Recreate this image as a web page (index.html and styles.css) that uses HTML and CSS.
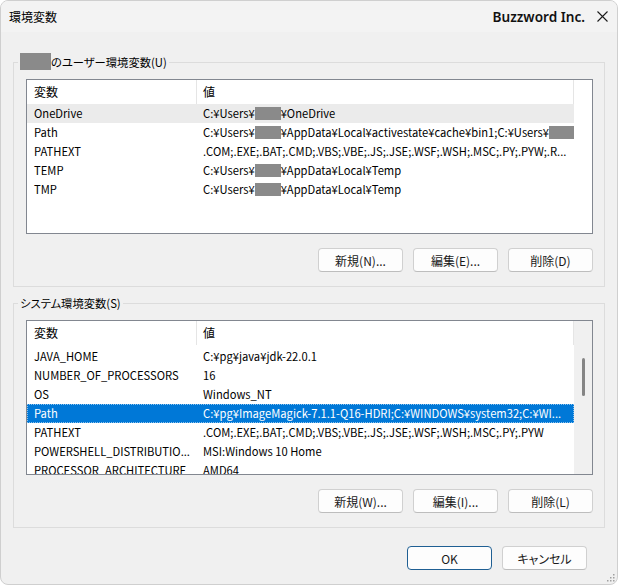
FILE: index.html
```html
<!DOCTYPE html>
<html lang="ja">
<head>
    <meta charset="UTF-8">
    <title>環境変数</title>
    <link rel="stylesheet" href="styles.css">
</head>
<body>
    <div class="window">
        <div class="titlebar">
            <span class="title">環境変数</span>
            <span class="brand">Buzzword Inc.</span>
            <svg class="close" width="11" height="11" viewBox="0 0 11 11">
                <path d="M0.5 0.5 L10.5 10.5 M10.5 0.5 L0.5 10.5" stroke="#1b1b1b" stroke-width="1.1" fill="none"/>
            </svg>
        </div>

        <div class="content">
            <fieldset class="group">
                <legend><span class="redact redact-legend"></span>のユーザー環境変数(U)</legend>
                <div class="listbox">
                    <div class="list-main">
                        <div class="list-head">
                            <div class="col-name">変数</div>
                            <div class="col-val">値</div>
                        </div>
                        <div class="rows">
                            <div class="row hover"><div class="name">OneDrive</div><div class="val">C:¥Users¥<span class="redact"></span>¥OneDrive</div></div>
                            <div class="row"><div class="name">Path</div><div class="val">C:¥Users¥<span class="redact"></span>¥AppData¥Local¥activestate¥cache¥bin1;C:¥Users¥<span class="redact"></span></div></div>
                            <div class="row"><div class="name">PATHEXT</div><div class="val">.COM;.EXE;.BAT;.CMD;.VBS;.VBE;.JS;.JSE;.WSF;.WSH;.MSC;.PY;.PYW;.R...</div></div>
                            <div class="row"><div class="name">TEMP</div><div class="val">C:¥Users¥<span class="redact"></span>¥AppData¥Local¥Temp</div></div>
                            <div class="row"><div class="name">TMP</div><div class="val">C:¥Users¥<span class="redact"></span>¥AppData¥Local¥Temp</div></div>
                        </div>
                    </div>
                    <div class="list-side"></div>
                </div>
                <div class="buttons">
                    <button class="btn">新規(N)...</button>
                    <button class="btn">編集(E)...</button>
                    <button class="btn">削除(D)</button>
                </div>
            </fieldset>

            <fieldset class="group group-system">
                <legend>システム環境変数(S)</legend>
                <div class="listbox">
                    <div class="list-main">
                        <div class="list-head">
                            <div class="col-name">変数</div>
                            <div class="col-val">値</div>
                        </div>
                        <div class="rows rows-scrolled">
                            <div class="row"><div class="name">JAVA_HOME</div><div class="val">C:¥pg¥java¥jdk-22.0.1</div></div>
                            <div class="row"><div class="name">NUMBER_OF_PROCESSORS</div><div class="val">16</div></div>
                            <div class="row"><div class="name">OS</div><div class="val">Windows_NT</div></div>
                            <div class="row selected"><div class="name">Path</div><div class="val">C:¥pg¥ImageMagick-7.1.1-Q16-HDRI;C:¥WINDOWS¥system32;C:¥WI...</div></div>
                            <div class="row"><div class="name">PATHEXT</div><div class="val">.COM;.EXE;.BAT;.CMD;.VBS;.VBE;.JS;.JSE;.WSF;.WSH;.MSC;.PY;.PYW</div></div>
                            <div class="row"><div class="name">POWERSHELL_DISTRIBUTIO...</div><div class="val">MSI:Windows 10 Home</div></div>
                            <div class="row"><div class="name">PROCESSOR_ARCHITECTURE</div><div class="val">AMD64</div></div>
                        </div>
                    </div>
                    <div class="list-side scrollbar">
                        <div class="thumb"></div>
                    </div>
                </div>
                <div class="buttons">
                    <button class="btn">新規(W)...</button>
                    <button class="btn">編集(I)...</button>
                    <button class="btn">削除(L)</button>
                </div>
            </fieldset>
        </div>

        <div class="footer">
            <button class="btn btn-default">OK</button>
            <button class="btn">キャンセル</button>
        </div>

        <svg class="grip" width="9" height="9" viewBox="0 0 9 9">
            <rect x="7" y="1" width="1.5" height="1.5" fill="#a0a0a0"/>
            <rect x="4" y="4" width="1.5" height="1.5" fill="#a0a0a0"/>
            <rect x="7" y="4" width="1.5" height="1.5" fill="#a0a0a0"/>
            <rect x="1" y="7" width="1.5" height="1.5" fill="#a0a0a0"/>
            <rect x="4" y="7" width="1.5" height="1.5" fill="#a0a0a0"/>
            <rect x="7" y="7" width="1.5" height="1.5" fill="#a0a0a0"/>
        </svg>
    </div>
</body>
</html>
```

FILE: styles.css
```css
:root {
    --bg: #f0f0f0;
    --frame: #cfcfcf;
    --group-border: #dcdcdc;
    --list-border: #828790;
    --divider: #e5e5e5;
    --select: #0078d7;
    --redact: #8a8a8a;
    --font: "Noto Sans CJK JP", "Noto Sans", sans-serif;
}

* {
    box-sizing: border-box;
}

body {
    margin: 0;
    background: #fff;
    font-family: var(--font);
    font-size: 12px;
    color: #000;
}

.window {
    position: relative;
    width: 618px;
    height: 585px;
    background: var(--bg);
    border: 1px solid var(--frame);
    border-radius: 8px;
    overflow: hidden;
}

/* Заголовок */
.titlebar {
    display: flex;
    align-items: center;
    height: 31px;
    padding: 0 9px 0 8px;
    background: #f3f3f3;
}

.title {
    font-size: 12px;
}

.brand {
    margin-left: auto;
    font-family: "Noto Sans", sans-serif;
    font-weight: 600;
    font-size: 13.6px;
    color: #111;
}

.close {
    margin-left: 12px;
}

/* Группы */
.content {
    padding: 22px 12px 0;
}

.group {
    margin: 0;
    min-width: 0;
    padding: 9px 11px 14px 12px;
    border: 1px solid var(--group-border);
}

.group-system {
    margin-top: 8px;
}

.group legend {
    margin-left: -8px;
    padding: 0 2px;
    line-height: 16px;
    font-size: 11.3px;
    font-feature-settings: "palt";
}

.redact {
    display: inline-block;
    width: 26px;
    height: 13px;
    vertical-align: -2px;
    background: var(--redact);
}

.redact-legend {
    width: 31px;
    height: 17px;
    vertical-align: top;
    margin-top: -1px;
}

/* Список */
.listbox {
    display: flex;
    height: 155px;
    background: #fff;
    border: 1px solid var(--list-border);
    overflow: hidden;
}

.list-main {
    width: 547px;
}

.list-side {
    flex: 1;
}

.scrollbar {
    position: relative;
    background: #f0f0f0;
}

.thumb {
    position: absolute;
    top: 37px;
    left: 8px;
    width: 3px;
    height: 38px;
    border-radius: 2px;
    background: #858585;
}

.list-head {
    display: flex;
    height: 24px;
    line-height: 23px;
}

.col-name {
    width: 170px;
    padding-left: 7px;
    border-right: 1px solid var(--divider);
}

.col-val {
    flex: 1;
    padding-left: 6px;
    border-right: 1px solid var(--divider);
}

.rows-scrolled {
    margin-top: 2px;
}

.row {
    display: flex;
    height: 19px;
    line-height: 19px;
    font-size: 11.2px;
    white-space: nowrap;
}

.row .name {
    width: 170px;
    padding-left: 7px;
    overflow: hidden;
}

.row .val {
    flex: 1;
    padding-left: 6px;
    overflow: hidden;
}

.row.hover {
    background: #ebebeb;
}

.row.selected {
    background: var(--select);
    color: #fff;
    outline: 1px dotted rgba(255, 255, 255, 0.55);
    outline-offset: -1px;
}

/* Кнопки */
.buttons {
    display: flex;
    justify-content: flex-end;
    gap: 10px;
    margin-top: 14px;
}

.btn {
    width: 85px;
    height: 24px;
    padding: 0;
    font-family: var(--font);
    font-size: 12px;
    font-feature-settings: "palt";
    color: #1a1a1a;
    background: #fdfdfd;
    border: 1px solid #d0d0d0;
    border-bottom-color: #bdbdbd;
    border-radius: 4px;
}

.btn-default {
    border: 1px solid #1f5f93;
}

.footer {
    display: flex;
    justify-content: flex-end;
    gap: 10px;
    margin-top: 18px;
    padding-right: 30px;
}

.grip {
    position: absolute;
    right: 2px;
    bottom: 2px;
}
```
